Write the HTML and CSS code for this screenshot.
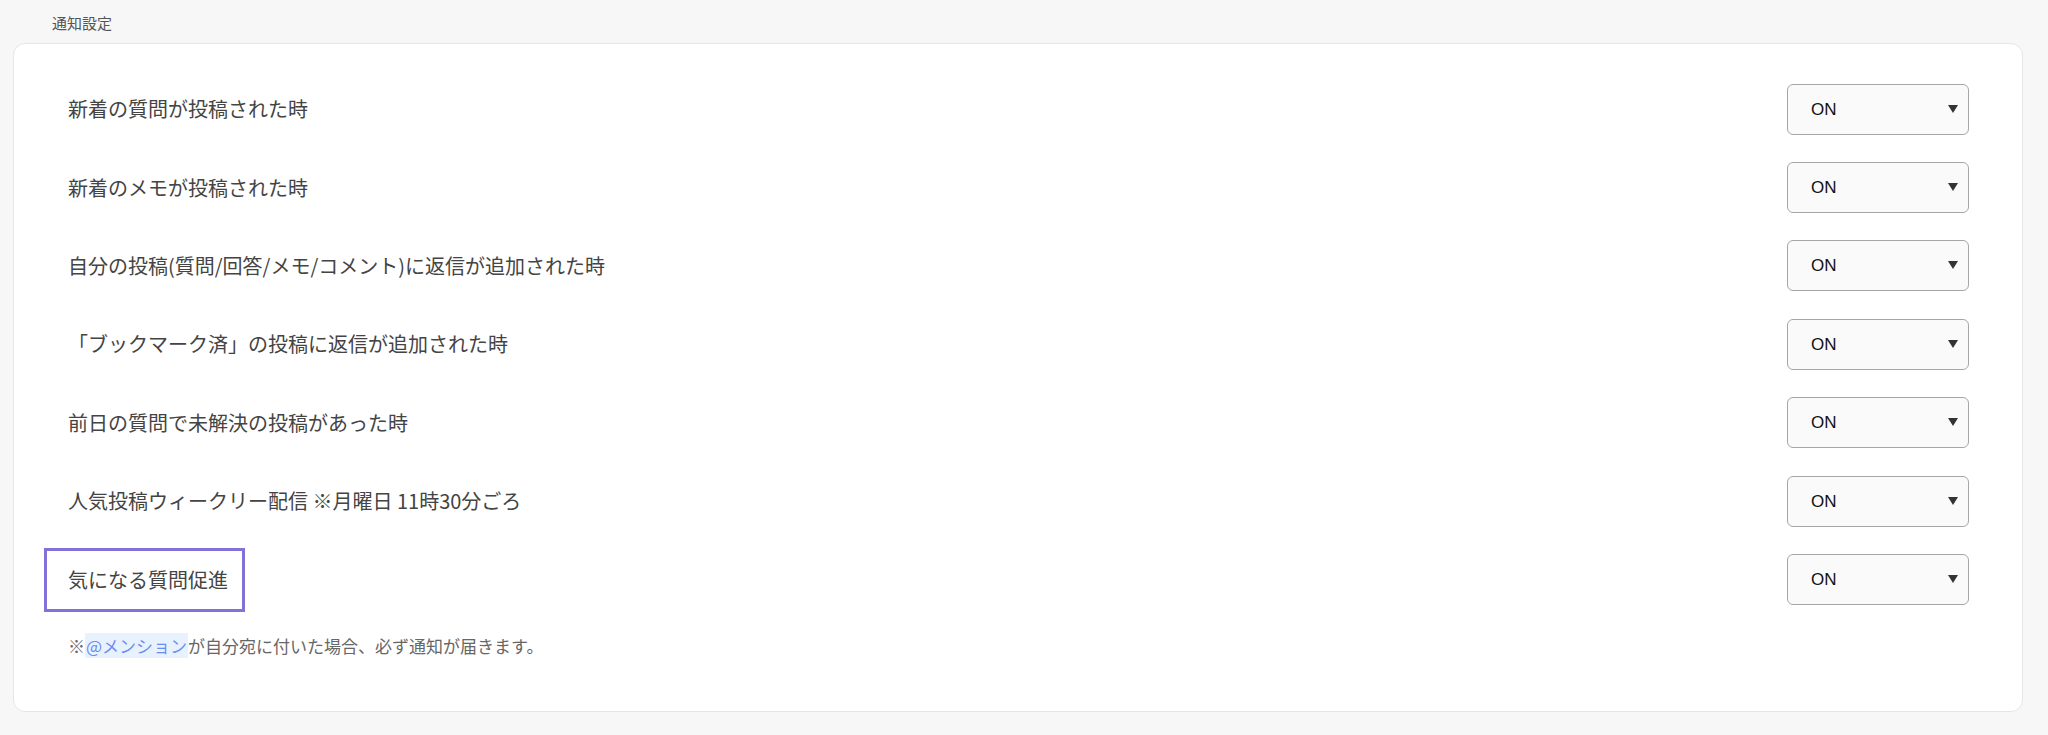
FILE: index.html
```html
<!doctype html>
<html lang="ja">

<head>
	<meta charset="utf-8">
	<title>通知設定</title>
	<link rel="stylesheet" href="styles.css">
</head>

<body>
	<!-- notification settings -->
	<div class="section-title">通知設定</div>
	<div class="settings-card">
		<div class="setting-row">
			<span class="setting-label">新着の質問が投稿された時</span>
			<div class="select-wrap">
				<select class="onoff-select"><option>ON</option><option>OFF</option></select>
			</div>
		</div>
		<div class="setting-row">
			<span class="setting-label">新着のメモが投稿された時</span>
			<div class="select-wrap">
				<select class="onoff-select"><option>ON</option><option>OFF</option></select>
			</div>
		</div>
		<div class="setting-row">
			<span class="setting-label">自分の投稿(質問/回答/メモ/コメント)に返信が追加された時</span>
			<div class="select-wrap">
				<select class="onoff-select"><option>ON</option><option>OFF</option></select>
			</div>
		</div>
		<div class="setting-row">
			<span class="setting-label">「ブックマーク済」の投稿に返信が追加された時</span>
			<div class="select-wrap">
				<select class="onoff-select"><option>ON</option><option>OFF</option></select>
			</div>
		</div>
		<div class="setting-row">
			<span class="setting-label">前日の質問で未解決の投稿があった時</span>
			<div class="select-wrap">
				<select class="onoff-select"><option>ON</option><option>OFF</option></select>
			</div>
		</div>
		<div class="setting-row">
			<span class="setting-label">人気投稿ウィークリー配信 ※月曜日 11時30分ごろ</span>
			<div class="select-wrap">
				<select class="onoff-select"><option>ON</option><option>OFF</option></select>
			</div>
		</div>
		<div class="setting-row">
			<span class="setting-label highlighted">気になる質問促進</span>
			<div class="select-wrap">
				<select class="onoff-select"><option>ON</option><option>OFF</option></select>
			</div>
		</div>
		<p class="setting-note">※<span class="mention">@メンション</span>が自分宛に付いた場合、必ず通知が届きます。</p>
	</div>
</body>

</html>
```

FILE: styles.css
```css
* { margin: 0; padding: 0; box-sizing: border-box; }
body { background-color: #f7f7f7; font-family: "Noto Sans CJK JP", "Noto Sans", sans-serif; color: #444; }
.section-title { font-size: 15px; line-height: 20px; color: #555; padding: 13px 0 0 52px; height: 43px; }
.settings-card { margin: 0 25px 0 13px; height: 669px; background-color: #fff; border: 1px solid #e6e6e6; border-radius: 12px; padding: 26px 53px 0 54px; }
.setting-row { display: flex; align-items: center; justify-content: space-between; height: 78.4px; }
.setting-label { font-size: 20px; line-height: 28px; color: #444; position: relative; }
.setting-label.highlighted::after { content: ""; position: absolute; left: -24px; right: -17px; top: -18px; bottom: -18px; border: 3px solid #8271d6; }
.select-wrap { position: relative; width: 182px; height: 51px; }
.select-wrap::after { content: ""; position: absolute; right: 11px; top: 21px; border-left: 5.5px solid transparent; border-right: 5.5px solid transparent; border-top: 8px solid #333; pointer-events: none; }
.onoff-select { appearance: none; -webkit-appearance: none; width: 100%; height: 100%; border: 1px solid #a6a6a6; border-radius: 6px; background-color: #fafafa; font-family: "Liberation Sans", Arial, sans-serif; font-size: 17px; color: #111; padding-left: 23px; outline: none; }
.setting-note { margin-top: 15px; font-size: 17px; line-height: 24px; color: #666; }
.mention { color: #6b8ef0; background-color: #e8f1fe; padding: 0 1px; }
```
